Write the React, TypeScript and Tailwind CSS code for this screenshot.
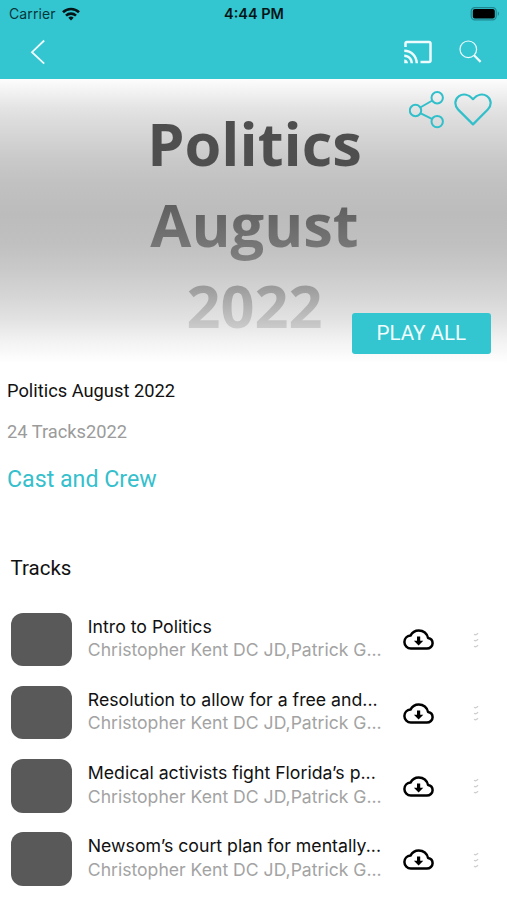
import React from 'react';
import { MdCast } from 'react-icons/md';

const tracks = [
  { title: 'Intro to Politics', artists: 'Christopher Kent DC JD,Patrick G...' },
  { title: 'Resolution to allow for a free and...', artists: 'Christopher Kent DC JD,Patrick G...' },
  { title: 'Medical activists fight Florida’s p...', artists: 'Christopher Kent DC JD,Patrick G...' },
  { title: 'Newsom’s court plan for mentally...', artists: 'Christopher Kent DC JD,Patrick G...' },
];

const WifiIcon: React.FC = () => (
  <svg width="18" height="14" viewBox="0 0 18 14" fill="none" stroke="#041517" strokeWidth="2.6">
    <path d="M1 5.2a11.5 11.5 0 0 1 16 0" />
    <path d="M4 8.6a7.2 7.2 0 0 1 10 0" />
    <path d="M9 13.6l-2.7-2.8a3.9 3.9 0 0 1 5.4 0z" fill="#041517" stroke="none" />
  </svg>
);

const BatteryIcon: React.FC = () => (
  <svg width="31" height="14" viewBox="0 0 31 14" fill="none">
    <rect x="1.2" y="0.7" width="25" height="12.2" rx="3.6" stroke="#1f8791" strokeWidth="1.2" />
    <rect x="2.8" y="2" width="22" height="9.4" rx="2" fill="#000" />
    <path d="M27.800 4.600c1.600.6 1.600 3.600 0 4.300z" fill="#1f8791" />
  </svg>
);

const StatusBar: React.FC = () => (
  <div className="flex h-7 items-center pl-[9px] pr-[6px] font-['Inter',sans-serif]">
    <div className="flex flex-1 items-center gap-[6px]">
      <span className="text-[14px] leading-none tracking-[0.1px] text-[#07363a]">Carrier</span>
      <WifiIcon />
    </div>
    <span className="mr-[2px] text-[14.5px] font-semibold leading-none text-[#041517]">4:44 PM</span>
    <div className="flex flex-1 justify-end">
      <BatteryIcon />
    </div>
  </div>
);

const NavBar: React.FC = () => (
  <div className="flex h-[51px] items-center justify-between pb-[4px] pl-[30px] pr-[24px] text-[#effcfd]">
    <button aria-label="Back">
      <svg width="16" height="26" viewBox="0 0 16 26" fill="none" stroke="currentColor" strokeWidth="1.8">
        <path d="M14.2 1.5L2 13.2l12.2 11.4" />
      </svg>
    </button>
    <div className="flex items-center gap-[25px]">
      <MdCast size={30} />
      <svg width="25" height="25" viewBox="0 0 25 25" fill="none" stroke="currentColor">
        <circle cx="10.3" cy="10.3" r="8.3" strokeWidth="1.2" />
        <path d="M16 16.3l6.6 6.6" strokeWidth="2.2" />
      </svg>
    </div>
  </div>
);

const ShareIcon: React.FC = () => (
  <svg width="36" height="38" viewBox="0 0 36 38" fill="none" stroke="#31bfca" strokeWidth="2">
    <circle cx="6.5" cy="19.5" r="5.7" />
    <circle cx="28.2" cy="6.8" r="5.7" />
    <circle cx="28.2" cy="30.6" r="5.7" />
    <path d="M11.2 16.5l12.2-7M11.2 22.2l12.2 5.9" />
  </svg>
);

const HeartIcon: React.FC = () => (
  <svg className="mt-[2px]" width="38" height="33" viewBox="0 0 38 33" fill="none" stroke="#31bfca" strokeWidth="2.2">
    <path d="M19 31.4L4.2 16.6C-.1 12.2.7 6 5 3.1 9.2.4 14.6 1.4 19 6.200 23.4 1.4 28.8.4 33 3.1c4.3 2.9 5.1 9.1.8 13.5z" strokeLinejoin="round" />
  </svg>
);

const DownloadIcon: React.FC = () => (
  <svg width="31" height="21" viewBox="0 0 31 21" fill="none">
    <path
      d="M25 8.9C24.2 4.5 20.4 1.4 15.8 1.4c-3.6 0-6.7 2-8.3 5.2C4 7 1.4 9.7 1.4 13.1c0 3.6 2.9 6.5 6.500 6.500h15.900c3.200 0 5.800-2.400 5.800-5.400 0-2.900-2-5-4.600-5.300z"
      stroke="#000"
      strokeWidth="2.5"
      strokeLinejoin="round"
    />
    <path d="M14 7.5h3.2v4.200h3.100l-4.700 4.700-4.700-4.700H14z" fill="#000" />
  </svg>
);

const MoreIcon: React.FC = () => (
  <svg width="6" height="18" viewBox="0 0 6 18" fill="none" stroke="#cfcfcf" strokeWidth="1.3">
    <path d="M1 3.2q2.4 1.4 4-1M1 9.2q2.4 1.4 4-1M1 15.2q2.4 1.4 4-1" />
  </svg>
);

const TrackRow: React.FC<{ title: string; artists: string }> = ({ title, artists }) => (
  <li className="flex h-[73.3px] items-start pl-[10.6px]">
    <div className="h-[53.7px] w-[61.2px] shrink-0 rounded-[12px] bg-[#595959]" />
    <div className="ml-[16px] w-[315px] shrink-0 whitespace-nowrap pt-[2px] font-['Inter',sans-serif] leading-[23.5px]">
      <p className="text-[17.7px] text-[#111]">{title}</p>
      <p className="text-[17.6px] text-[#a3a3a3]">{artists}</p>
    </div>
    <div className="flex h-[54.5px] flex-1 items-center justify-between pr-[28px]">
      <DownloadIcon />
      <MoreIcon />
    </div>
  </li>
);

const App: React.FC = () => (
  <div className="h-[900px] w-full overflow-hidden bg-white font-['Roboto',sans-serif]">
    <header className="h-[79px] bg-[#33c6d1]">
      <StatusBar />
      <NavBar />
    </header>

    <section className="relative h-[284px] bg-[linear-gradient(180deg,#fdfdfd_0px,#e3e3e3_30px,#d8d8d8_50px,#c9c9c9_80px,#c1c1c1_105px,#bcbcbc_135px,#c0c0c0_165px,#c9c9c9_190px,#d6d6d6_218px,#e2e2e2_240px,#f1f1f1_260px,#ffffff_284px)]">
      <h1 className="bg-[linear-gradient(180deg,#4d4d4d_0px,#4f4f4f_90px,#606060_128px,#7b7b7b_175px,#9b9b9b_208px,#cccccc_250px)] bg-clip-text pl-[2px] pt-[22.5px] text-center font-['Open_Sans',sans-serif] text-[59.5px] font-bold leading-[81.3px] text-transparent">
        Politics
        <br />
        August
        <br />
        2022
      </h1>
      <div className="absolute right-[15px] top-[12px] flex items-start gap-[9px]">
        <ShareIcon />
        <HeartIcon />
      </div>
      <button className="absolute right-[16px] top-[233.5px] h-[41.5px] w-[139.5px] rounded-[3px] bg-[#33c6d1] text-[20.5px] text-[#f2fdfe]">
        PLAY ALL
      </button>
    </section>

    <section className="flex flex-col pl-[7px] pt-[16px]">
      <h2 className="text-[18.3px] leading-[24px] text-[#111]">Politics August 2022</h2>
      <p className="mt-[17px] text-[18.3px] leading-[24px] text-[#9b9b9b]">24 Tracks2022</p>
      <p className="mt-[20px] text-[23.2px] leading-[30px] text-[#36bfcc]">Cast and Crew</p>
    </section>

    <section className="pt-[60px]">
      <h3 className="pl-[10.5px] text-[20.5px] leading-[28px] text-[#111]">Tracks</h3>
      <ul className="mt-[30.5px]">
        {tracks.map((track) => (
          <TrackRow key={track.title} title={track.title} artists={track.artists} />
        ))}
      </ul>
    </section>
  </div>
);

export default App;
